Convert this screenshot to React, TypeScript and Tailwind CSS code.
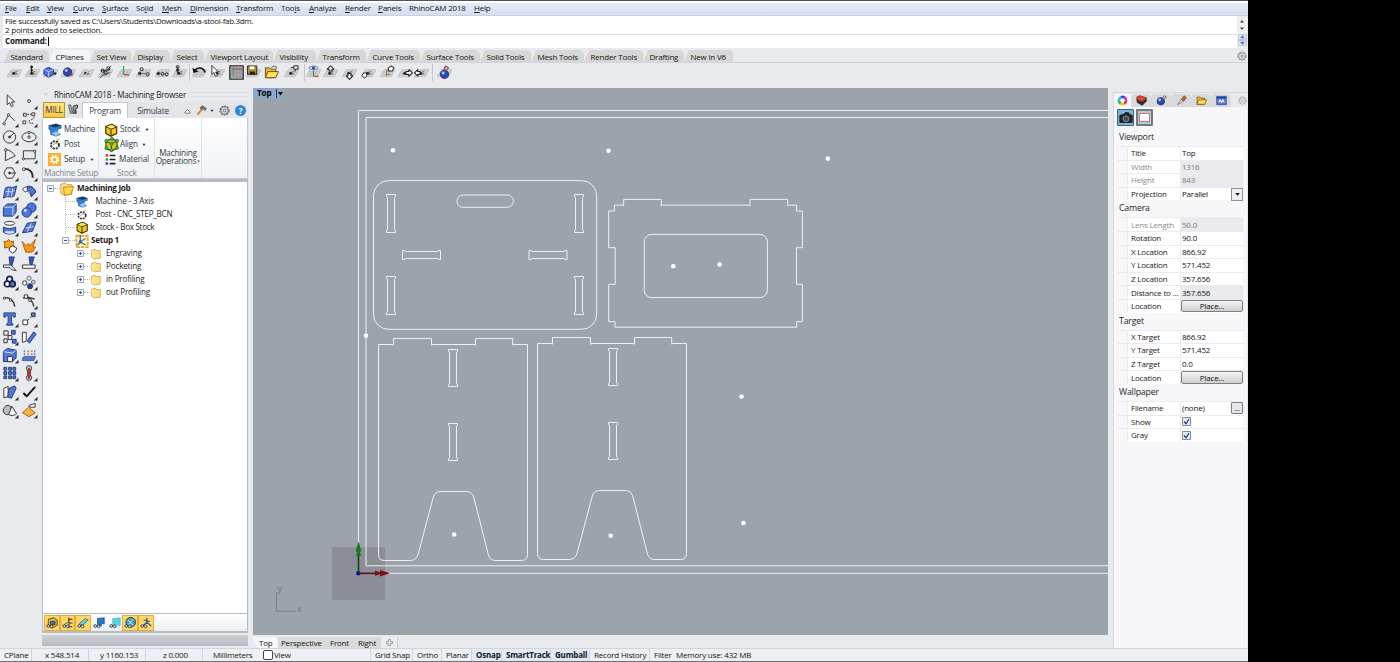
import React from "react";

type Node = React.ReactNode;

/* ---------- icon helpers ---------- */

function Ico({ children, className = "h-4 w-4", box = "0 0 16 16" }: { children: Node; className?: string; box?: string }) {
  return (
    <svg viewBox={box} className={`${className} shrink-0`} fill="none" stroke="#333" strokeWidth="1" strokeLinejoin="round">
      {children}
    </svg>
  );
}

const Plane = () => (
  <g>
    <path d="M4.500 5L16 5L12 12.500L0 12.500Z" fill="#d6d8da" stroke="#a9acb0" strokeWidth=".6" />
    <path d="M8.300 5L4 12.500M12.200 5L8 12.500M3 7.500H14.500M1.500 10H13.300" stroke="#a9acb0" strokeWidth=".6" />
  </g>
);
const Axes = () => (
  <g>
    <path d="M7 9L10.500 6.500" stroke="#3c9c4c" strokeWidth="1.200" />
    <path d="M7 9.500H11" stroke="#d04040" strokeWidth="1.200" />
    <circle cx="7" cy="9" r="1.500" fill="#222" stroke="none" />
  </g>
);
const Sphere = ({ x, y, r = 3.5 }: { x: number; y: number; r?: number }) => (
  <g>
    <circle cx={x} cy={y} r={r} fill="#2849b5" stroke="#16224f" strokeWidth=".7" />
    <circle cx={x - r * 0.3} cy={y - r * 0.35} r={r * 0.35} fill="#b7c8ff" stroke="none" />
  </g>
);
const Arrow = ({ d }: { d: string }) => <path d={d} fill="#fff" stroke="#222" strokeWidth="1.100" />;
const Folder = () => (
  <g>
    <path d="M1.500 3H6L7.500 4.500H12.500V13.500H1.500Z" fill="#f2b92c" stroke="#6d4c06" strokeWidth="1" />
    <path d="M4 7H15.500L12.500 13.500H1.500Z" fill="#ffdf63" stroke="#6d4c06" strokeWidth="1" />
  </g>
);

const toolbar: { w: string; g?: Node; sep?: boolean; pressed?: boolean }[] = [
  { w: "w-[18px]", g: <><Plane /><Axes /></> },
  { w: "w-[19px]", g: <><Plane /><Axes /><path d="M7 9V2" stroke="#222" strokeWidth="1.2" /><circle cx="7" cy="2" r="1.5" fill="#222" stroke="none" /><circle cx="7" cy="5.500" r="1.2" fill="#222" stroke="none" /></> },
  { w: "w-[17px]", g: <><Plane /><path d="M1 5L6 2.500L11 5V10L6 13L1 10Z" fill="#4a74dc" stroke="#1b2e78" /><path d="M1.500 5L6 7L10.500 5M6 7V12.500" stroke="#c8d8ff" /><circle cx="13" cy="9" r="1.300" fill="#222" stroke="none" /></> },
  { w: "w-[18px]", g: <><Plane /><Sphere x={7} y={7.5} r={4.500} /><circle cx="11" cy="10" r="1.5" fill="#a33" stroke="none" /></> },
  { w: "w-[19px]", g: <><Plane /><Axes /><path d="M6 12L12 3" stroke="#eee" /></> },
  { w: "w-[18px]", g: <><Plane /><path d="M2 14L14 1M3 6L13 5M6 11L13 8" stroke="#444" /><circle cx="5" cy="6" r="1.7" stroke="#222" /><circle cx="11" cy="3.500" r="1.7" stroke="#222" /><circle cx="8" cy="8" r="1.7" stroke="#222" /></> },
  { w: "w-[20px]", g: <><Plane /><path d="M7 1V10" stroke="#2fb045" strokeWidth="1.3" /><path d="M7 10L13 10.5" stroke="#d64545" strokeWidth="1.200" /></> },
  { w: "w-[19px]", g: <><Plane /><circle cx="6" cy="4.500" r="1.6" stroke="#222" /><circle cx="4" cy="9" r="1.4" fill="#222" /><circle cx="12.500" cy="10" r="1.7" stroke="#222" /><path d="M6 9L10 9" stroke="#c44" /></> },
  { w: "w-[18px]", g: <><Plane /><circle cx="3.500" cy="9" r="1.4" fill="#222" /><circle cx="8" cy="9.500" r="1.5" stroke="#222" /><circle cx="12.500" cy="10" r="1.6" stroke="#222" /></> },
  { w: "w-[16px]", g: <><Plane /><Axes /><path d="M6 9V2" stroke="#222" /><circle cx="6" cy="2" r="1.5" stroke="#222" /><circle cx="6" cy="5.500" r="1.3" fill="#222" /></> },
  { w: "w-[5px]", sep: true },
  { w: "w-[14px]", g: <><Plane /><path d="M3 6C6 1.500 12 2.500 14 8" stroke="#111" strokeWidth="1.7" /><path d="M.5 3L1.500 8.500L7 7Z" fill="#111" stroke="none" /></> },
  { w: "w-[22px]", g: <><Plane /><Axes /><path d="M2 .5V10L4 8L6 12L8 11L6 7.5H9Z" fill="#fff" stroke="#222" strokeWidth=".9" /></> },
  { w: "w-[16px]", pressed: true, g: <><path d="M.8 .8H15.2V15.2H.8Z" fill="#a4a4a8" stroke="#2b2b30" strokeWidth="1.300" /><path d="M1 4H15M1 8H15M8.500 1V15M12 1V15" stroke="#8e8e93" strokeWidth=".5" /><path d="M4.500 1.500V12" stroke="#3f9a4d" /><path d="M3.500 4.500H14.500" stroke="#b65050" /></> },
  { w: "w-[18px]", g: <><Plane /><path d="M1.500 1H11.5V10H1.500Z" fill="#a58f2e" stroke="#29251a" /><path d="M4 1.5H9V4.500H4Z" fill="#fff" stroke="none" /><path d="M4 7H9.500V10H4Z" fill="#222" stroke="none" /></> },
  { w: "w-[18px]", g: <><Folder /><path d="M8 3C10 0 13 1 13.500 4" stroke="#333" /></> },
  { w: "w-[22px]", g: <><Plane /><Axes /><path d="M7 3L12 2V7" stroke="#222" /><path d="M10.500 .8H15V4.500H10.500Z" fill="#eee" stroke="#222" /></> },
  { w: "w-[4px]", sep: true },
  { w: "w-[14px]", g: <><Plane /><path d="M3 3C6 .5 10 .5 13 3C10 5.500 6 5.500 3 3Z" fill="#fff" stroke="#579" /><circle cx="8" cy="3" r="1.8" fill="#2849b5" stroke="none" /><path d="M8 6V12" stroke="#2fa045" strokeWidth="1.300" /><path d="M8 12H13.500" stroke="#c44" strokeWidth="1.300" /></> },
  { w: "w-[21px]", g: <><Plane /><Axes /><Arrow d="M6.500 6.500V4.500H4.500L8 .8L11.500 4.500H9.500V6.500Z" /></> },
  { w: "w-[17px]", g: <><Plane /><Axes /><Arrow d="M6.500 9V11.500H4.500L8 15.300L11.500 11.500H9.500V9Z" /></> },
  { w: "w-[20px]", g: <><Plane /><Axes /><path d="M1 11L3 8.500H6V12L3.500 14Z" fill="#fff" stroke="#222" /></> },
  { w: "w-[19px]", g: <><Plane /><path d="M7 5V12" stroke="#c44" /><path d="M7 10H11" stroke="#2fa045" /><Arrow d="M9 6.500V3L12 1L15 3L13 6.500Z" /></> },
  { w: "w-[17px]", g: <><Plane /><Axes /><Arrow d="M8.500 7H11.500V5L15.500 8.500L11.500 12V10H8.500Z" /></> },
  { w: "w-[14px]", g: <><Plane /><Axes /><Arrow d="M6.500 7H4V5L.5 8.500L4 12V10H6.500Z" /></> },
  { w: "w-[9px]", sep: true },
  { w: "w-[14px]", g: <><Plane /><Sphere x={8} y={10} r={4.500} /><path d="M7 5L9 1L12.500 3L10 6Z" fill="#e8a0a0" stroke="#444" /></> },
];

const B = "#4e78d6";
const tools: Node[] = [
  <path d="M5 1.500V12L7.500 9.500L9.500 14L11.500 13L9.500 9H13Z" fill="#fff" />,
  <circle cx="8" cy="8" r="1.500" fill="#fff" />,
  <><path d="M1.500 13L6.500 3.500L13 10" /><circle cx="1.800" cy="13" r="1.200" fill="#fff" /><circle cx="6.500" cy="3.500" r="1.200" fill="#fff" /></>,
  <><path d="M3 3H11C15 3 14 8 10 9C6 10 7 13 13 12.500" strokeDasharray="2 1" /><path d="M2 2H5V5H2ZM11 1.500H14V4.500H11ZM1.500 10H4.500V13H1.500Z" fill="#fff" /></>,
  <><circle cx="7.500" cy="8" r="6.500" /><path d="M7.500 8L12 4" /><circle cx="7.500" cy="8" r="1" fill="#333" /></>,
  <><ellipse cx="8" cy="8" rx="7.500" ry="5" /><circle cx="8" cy="8" r="1.300" fill="#fff" /><circle cx="8" cy="3.300" r="1.300" fill="#fff" /></>,
  <><path d="M3 14L3.500 2C8 3 11 5 13.500 9Z" /><circle cx="3.500" cy="2.500" r="1.300" fill="#fff" /></>,
  <><path d="M2 3.500H14.500V12H2Z" /><circle cx="2" cy="12" r="1.200" fill="#fff" /><circle cx="14" cy="4" r="1.200" fill="#fff" /></>,
  <><path d="M4.500 2.500H10.500L13.500 8L10.500 13.500H4.500L1.500 8Z" /><circle cx="7.500" cy="8" r="1" fill="#333" /><path d="M8 8H14" /></>,
  <><path d="M2 4C8 3 12 6 12 13" strokeWidth="2" /><circle cx="2.500" cy="4" r="1.500" fill="#fff" /></>,
  <><path d="M3 4C7 1 9 5 15 1.500L12.500 12C8 15 6 11 1 14.500Z" fill={B} stroke="#26397c" /><path d="M7 3.500L5.500 12.500M11 3.500L9.500 12.500M3 8C7 6 9 10 13 6" stroke="#d7e2ff" /></>,
  <><path d="M1 5C7 -.5 13 1.500 15 8L10.500 13C9 8 6 6 4 8Z" fill="#fff" /><path d="M6 3C10 1.500 14 4 15 8L10.500 13C10.500 8.500 8 6 6 6Z" fill={B} stroke="#26397c" /></>,
  <><path d="M1 5L5.500 1.500H14.500V10L11 14.500H1Z" fill={B} stroke="#26397c" /><path d="M1.500 5H11V14M11 5L14 2" stroke="#d7e2ff" /></>,
  <><circle cx="10.500" cy="5.500" r="5" fill={B} stroke="#26397c" /><circle cx="5.500" cy="10.500" r="5" fill={B} stroke="#26397c" /><circle cx="4" cy="8.500" r="1.500" fill="#d7e2ff" stroke="none" /></>,
  <><ellipse cx="7.500" cy="3" rx="5.500" ry="2" fill="#fff" /><path d="M1 7C4 9 11 9 14 7V12.500C11 15 4 15 1 12.500Z" fill={B} stroke="#26397c" /><path d="M3 12C6 13 9 13 12 12" stroke="#d7e2ff" strokeWidth="2.500" /></>,
  <><path d="M1 13L6 3L15.500 1.500L11.500 11.500Z" fill={B} stroke="#26397c" /><path d="M4 8L13 6.500M6 12L10.500 3" stroke="#d7e2ff" /></>,
  <><path d="M1.500 3L4.500 3.500L6.500 .8L8.500 3.500L12 3L11 6.500L13 9L10 10L8 12L6 9.500L2 10L2.500 6.500Z" fill="#f6a31d" stroke="#9a5d00" /><path d="M8 9L11 8L15 10L14 13.500L10.500 15.500L7 12.500Z" fill="#fff" /></>,
  <path d="M.5 3L5 7.500L7.500 5L8.500 8L15 .8L12 9L15 9L11.500 14.500H4.500Z" fill="#f6941d" stroke="#b96200" />,
  <><path d="M7 .5H12.500L10 10L8 9Z" fill="#3058c0" stroke="#26397c" /><path d="M1 9H9L14.500 15L10 14L8 11.500H1Z" fill="#fff" /></>,
  <><path d="M8 .5H13.500L11 9L9 8Z" fill="#3058c0" stroke="#26397c" /><path d="M1 9H14.500V12.500H1Z" fill="#fff" /></>,
  <><circle cx="7.500" cy="5" r="3" fill="#dfe6fb" strokeWidth="1.800" stroke="#18203c" /><circle cx="5" cy="10" r="3" fill="#fff" strokeWidth="1.800" stroke="#18203c" /><circle cx="10.500" cy="10" r="3" fill={B} strokeWidth="1.800" stroke="#18203c" /></>,
  <><circle cx="8" cy="4" r="2.200" fill="#dfe6fb" stroke="#667" /><circle cx="3.500" cy="9" r="2.300" fill="#fff" /><circle cx="12.500" cy="8" r="2" fill="#b9c8f0" stroke="#667" /><circle cx="9" cy="12.500" r="2.700" fill="#24409c" /></>,
  <><path d="M1.500 5C7 3 12 7 13 14" strokeWidth="1.500" /><circle cx="2" cy="5" r="1.200" fill="#fff" /><circle cx="8.500" cy="7" r="1.300" fill="#fff" /></>,
  <><path d="M1.500 5C7 3 12 7 13 14M4 3L14 6" strokeWidth="1.300" /><path d="M3 1.500H6.500V5H3Z" fill="#fff" /><circle cx="9" cy="7" r="1.500" fill="#fff" /></>,
  <path d="M1.500 1.500H13.500V6H12L10.500 4.500H9.500V12L11 13V14.500H4.500V13L6 12V4.500H4.500L3 6H1.500Z" fill={B} stroke="#26397c" />,
  <><path d="M1.500 9H6.500V14H1.500Z" fill="#fff" /><path d="M10.500 1.500H14.500V5.500H10.500Z" fill={B} /><path d="M7 9L10 6" strokeDasharray="1.500 1" /></>,
  <><path d="M1.500 1.500H6V6H1.500ZM6 6.500H10V10.500H6ZM1.500 10H5V14H1.500Z" fill="#fff" stroke="#222" /><path d="M9.500 1H13.500V5H9.500ZM10.500 10.500H14.500V14.500H10.500Z" fill={B} stroke="#26397c" /></>,
  <><path d="M1 3H5V12.500L1 13.500Z" fill="#fff" /><path d="M6 12L13 2.500L15.500 5L8.500 14.500Z" fill={B} stroke="#26397c" /></>,
  <><path d="M1 4L5.500 1L14.500 3V11L10.500 15H1Z" fill={B} stroke="#26397c" /><path d="M5.500 9.500H10.500V15H5.500Z" fill="#fff" /><path d="M1.500 4.500L10.500 6L14 3.500" stroke="#d7e2ff" /></>,
  <><path d="M1 11L3 9.500H15L13 14H1Z" fill={B} stroke="#26397c" strokeWidth=".6" /><path d="M3 3V8M7 3V8M11 3V8M14 3V8" stroke="#555" strokeDasharray="2 1" /></>,
  <path d="M1.500 2H4.500V5H1.500ZM6.500 2H9.500V5H6.500ZM11 2H14V5H11ZM1.500 6.500H4.500V9.500H1.500ZM6.500 6.500H9.500V9.500H6.500ZM11 6.500H14V9.500H11ZM1.500 11H4.500V14H1.500ZM6.500 11H9.500V14H6.500ZM11 11H14V14H11Z" fill={B} stroke="#26397c" />,
  <><circle cx="8" cy="3" r="2.800" fill="#d9dcdf" /><circle cx="8" cy="13" r="2.800" fill="#d9dcdf" /><path d="M6.500 6H9.500V10H6.500Z" fill="#eee" /><path d="M8 2.500V5M8 7V9M8 11V14" stroke="#cc2222" strokeWidth="2.500" /></>,
  <><path d="M1.500 4L6 2V13L1.500 14Z" fill="#fff" /><path d="M7 4L13 1.500L14.500 4L9.500 14.500L5.500 13.500Z" fill={B} stroke="#26397c" /></>,
  <path d="M2 9L5.500 12.500L14.500 2.500" stroke="#111" strokeWidth="2" />,
  <><path d="M.8 10C.8 2.500 7 1.500 9 5V12C6 13.500 3 13.500 .8 10Z" fill="#b9bcc1" /><path d="M10 4L15 12C12 14.500 8 14 6.500 12.500Z" fill="#f5f5f5" /></>,
  <><path d="M1 11L7.500 5L14.500 11L8 15Z" fill="#f4b342" stroke="#a06412" /><path d="M8 3L14.500 1V5L9 5Z" fill="#fff" /></>,
];

const MachineIco = ({ c = "h-[14px] w-[14px]" }: { c?: string }) => (
  <Ico className={c}>
    <path d="M1 3L9 1L15 3V6L11 7V11L14 13L9 15L3 13V9L1 7Z" fill="#2d7fd2" stroke="#1a4f86" strokeWidth=".7" />
    <path d="M1 3L8 5L15 3L9 1Z" fill="#20364f" stroke="none" />
    <path d="M4 12L10 9L14 12L9 15Z" fill="#8fc3f4" stroke="none" />
  </Ico>
);
const PostIco = ({ c = "h-[13px] w-[14px]" }: { c?: string }) => (
  <Ico className={c}>
    <ellipse cx="8" cy="8.500" rx="5" ry="4.500" fill="#fff" stroke="#2b2b2b" strokeWidth="2.200" strokeDasharray="2.600 1.200" />
    <path d="M5.500 9C7.500 6 10 6 11 8" stroke="#777" />
    <path d="M10 3L13 2" stroke="#d9a63c" strokeWidth="1.500" />
  </Ico>
);
const StockIco = ({ c = "h-[14px] w-[14px]" }: { c?: string }) => (
  <Ico className={c}>
    <path d="M2 4L9 1.500L14.500 4.500V12L8 15L2 12Z" fill="#f2c714" stroke="#3f3405" strokeWidth="1.300" />
    <path d="M2 4L8 7L14.500 4.500M8 7V15" stroke="#3f3405" strokeWidth="1.200" />
    <path d="M3 4.200L9 2.200L13 4.500L8 6.200Z" fill="#ffe86a" stroke="none" />
  </Ico>
);
const AlignIco = () => (
  <Ico className="h-[15px] w-[15px]">
    <path d="M2 4L9 2L14 4.500V12L8 15L2 12Z" fill="#dfc521" stroke="#27420f" strokeWidth="1.200" />
    <path d="M2 5L8 7L14 4.500M8 7V15" stroke="#27420f" />
    <g fill="#3fc04a" stroke="#176b22" strokeWidth=".8">
      <circle cx="2.500" cy="4" r="1.600" /><circle cx="8.500" cy="2" r="1.600" /><circle cx="14" cy="4" r="1.600" />
      <circle cx="8" cy="7.500" r="1.600" /><circle cx="2.500" cy="12" r="1.600" /><circle cx="8" cy="14" r="1.600" /><circle cx="14" cy="11.500" r="1.600" />
    </g>
  </Ico>
);
const SetupIco = () => (
  <Ico className="h-[13px] w-[13px]">
    <path d="M0 0H16V16H0Z" fill="#f6b02c" stroke="none" />
    <circle cx="8" cy="8" r="5" stroke="#fff" strokeWidth="2" strokeDasharray="2 1.927" />
    <circle cx="8" cy="8" r="3.200" stroke="#fff" strokeWidth="1.800" />
  </Ico>
);
const Setup1Ico = () => (
  <Ico className="h-[14px] w-[14px]">
    <path d="M1.500 2H14.500V15H1.500Z" fill="#fff4cf" stroke="#eca527" strokeWidth="2.200" strokeDasharray="4 1" />
    <path d="M6 1V9L12 12.500M6 9L12 5M6 9L3 13" stroke="#245f9e" strokeWidth="1.300" />
    <circle cx="6" cy="9" r="1.800" fill="#245f9e" stroke="none" />
  </Ico>
);
const MaterialIco = () => (
  <Ico className="h-[13px] w-[13px]">
    <path d="M2 1.500H5V4.500H2Z" fill="#d52a2a" stroke="none" />
    <path d="M2 6.500H5V9.500H2Z" fill="#23a43a" stroke="none" />
    <path d="M2 11.500H5V14.500H2Z" fill="#2539c8" stroke="none" />
    <path d="M7 3H14M7 8H14M7 13H14" stroke="#222" strokeWidth="2" />
  </Ico>
);
const YellowFolder = ({ open = false }: { open?: boolean }) => (
  <Ico className={open ? "h-[14px] w-[14px]" : "h-[12px] w-[11px]"}>
    <path d="M1 2.500L6 1L8 3H13.500V14L5 15L1 13Z" fill="#fbe083" stroke="#c99a2b" strokeWidth="1" />
    {open ? <path d="M4 6L15.500 5L12.500 14L5 15Z" fill="#ffd34b" stroke="#b98617" /> : <path d="M3 4V13" stroke="#fff3bd" strokeWidth="1.500" />}
  </Ico>
);
const Gear = ({ className = "h-[11px] w-[11px]", tint = "#666" }: { className?: string; tint?: string }) => (
  <Ico className={className}>
    <circle cx="8" cy="8" r="6.500" stroke={tint} strokeWidth="1.800" strokeDasharray="3 1.200" />
    <circle cx="8" cy="8" r="5" stroke={tint} strokeWidth="1" />
    <circle cx="8" cy="8" r="2" stroke={tint} strokeWidth="1.300" />
  </Ico>
);

/* ---------- top bars ---------- */

const menus: [string, number, string][] = [
  ["File", 0, "w-[21px]"], ["Edit", 0, "w-[21px]"], ["View", 0, "w-[26px]"], ["Curve", 0, "w-[29px]"],
  ["Surface", 0, "w-[34px]"], ["Solid", 2, "w-[26px]"], ["Mesh", 0, "w-[28px]"], ["Dimension", 0, "w-[46px]"],
  ["Transform", 0, "w-[45px]"], ["Tools", 3, "w-[28px]"], ["Analyze", 0, "w-[36px]"], ["Render", 0, "w-[33px]"],
  ["Panels", 0, "w-[31px]"], ["RhinoCAM 2018", -1, "w-[65px]"], ["Help", 0, "w-[30px]"],
];

function MenuBar() {
  return (
    <div className="flex h-[15px] shrink-0 items-start border-t-2 border-b border-t-white border-b-[#c9d0e2] bg-gradient-to-b from-[#e6ebf6] to-[#d6def0] pl-[5px]">
      {menus.map(([t, u, w]) => (
        <span key={t} className={`${w} shrink-0 leading-[9px] whitespace-nowrap`}>
          {u < 0 ? t : <>{t.slice(0, u)}<span className="underline decoration-[0.7px] underline-offset-1">{t[u]}</span>{t.slice(u + 1)}</>}
        </span>
      ))}
    </div>
  );
}

function CommandArea() {
  return (
    <div className="flex h-[33px] shrink-0 bg-[#e9eaee] pb-[2px] pl-[3px] pr-[1px]">
      <div className="flex flex-1 flex-col">
        <div className="h-[19px] border-b border-[#d5dfe9] bg-white pl-[2px] leading-[9px]">
          <div className="tracking-[-0.320px]">File successfully saved as C:\Users\Students\Downloads\a-stool-fab.3dm.</div>
          <div>2 points added to selection.</div>
        </div>
        <div className="flex flex-1 items-center bg-white pb-px pl-[2px]">
          <b>Command:</b><span className="ml-[1px] h-[9px] w-px bg-black" />
        </div>
      </div>
      <div className="flex w-[10px] flex-col items-center bg-[#eeeff1]">
        <Ico className="h-[18px] w-[8px]" box="0 0 8 18"><path d="M4 4L6 6.500H2ZM4 14L6 11.500H2Z" fill="#444" stroke="none" /></Ico>
        <Ico className="h-[12px] w-[9px]" box="0 0 9 12"><path d="M.5 .5H8.500V11.500H.5Z" fill="#e3e7ee" stroke="#c2c8d4" /><path d="M4.500 1.500L6.500 4H2.500ZM4.500 10.500L6.500 8H2.500ZM1 6H8" fill="#6177c7" stroke="#6177c7" strokeWidth=".6" /></Ico>
      </div>
    </div>
  );
}

const tabs: [string, string][] = [
  ["Standard", "w-[45px]"], ["CPlanes", "w-[41px]"], ["Set View", "w-[41px]"], ["Display", "w-[39px]"], ["Select", "w-[34px]"],
  ["Viewport Layout", "w-[69px]"], ["Visibility", "w-[43px]"], ["Transform", "w-[50px]"], ["Curve Tools", "w-[54px]"],
  ["Surface Tools", "w-[60px]"], ["Solid Tools", "w-[51px]"], ["Mesh Tools", "w-[53px]"], ["Render Tools", "w-[59px]"],
  ["Drafting", "w-[41px]"], ["New in V6", "w-[49px]"],
];

function ToolTabs() {
  return (
    <div className="flex h-[14px] shrink-0 items-end justify-between border-b border-[#ccd3e2] bg-[#e9eaee] pl-[4px] pr-[1px]">
      <div className="flex">
        {tabs.map(([t, w]) => (
          <div key={t} className={`${w} h-[12px] shrink-0 pl-[6.500px] leading-[14px] whitespace-nowrap [clip-path:polygon(0_100%,5px_0,calc(100%-3px)_0,100%_25%,100%_100%)] ${t === "CPlanes" ? "bg-[#f3f4f8]" : "bg-[#d7d7d7]"}`}>{t}</div>
        ))}
      </div>
      <Gear className="mb-[1px] h-[10px] w-[10px]" tint="#888" />
    </div>
  );
}

function Toolbar() {
  return (
    <div className="flex h-[24px] shrink-0 items-start bg-[#e9eaee] pt-[1px] pl-[5px]">
      {toolbar.map((t, i) => (
        <div key={i} className={`${t.w} flex h-[17px] shrink-0 items-center justify-center`}>
          {t.sep ? <span className="h-[17px] w-px shrink-0 bg-[#c3c6cc]" /> : <Ico className={t.pressed ? "h-[15px] w-[15px]" : "h-[15px] w-[15px]"}>{t.g}</Ico>}
        </div>
      ))}
    </div>
  );
}

/* ---------- left side ---------- */

function ToolPalette() {
  return (
    <div className="grid w-[38px] shrink-0 auto-rows-[18.200px] grid-cols-[19px_19px] content-start pt-[5px] pl-px">
      {tools.map((g, i) => (
        <div key={i} className="flex items-center justify-center">
          <Ico className="h-[17px] w-[17px]" box="-.5 -.5 18 18">
            {g}
            {i > 0 && ![16, 18, 22, 27].includes(i) && <path d="M17 13V17H13Z" fill="#333" stroke="none" />}
          </Ico>
        </div>
      ))}
    </div>
  );
}

const Caret = () => <Ico className="ml-[3px] h-[4px] w-[4px]" box="0 0 5 4"><path d="M.5 .5H4.500L2.500 3.300Z" fill="#333" stroke="none" /></Ico>;

function Ribbon() {
  return (
    <div className="flex h-[61px] shrink-0 border-x border-b border-[#c5cad2] bg-gradient-to-b from-white to-[#f0f2f4] text-[8.200px] tracking-[-0.200px] text-[#333c4c]">
      <div className="flex w-[56px] flex-col border-r border-[#e1e3e6] pt-[4px] pl-[5px]">
        <div className="flex h-[15px] items-center gap-[2px]"><MachineIco /><span>Machine</span></div>
        <div className="flex h-[15px] items-center gap-[2px]"><PostIco /><span>Post</span></div>
        <div className="flex h-[15px] items-center gap-[2px]"><SetupIco /><span className="ml-px">Setup</span><Caret /></div>
        <div className="-ml-[4px] leading-[11px] whitespace-nowrap text-[#7d8694]">Machine Setup</div>
      </div>
      <div className="flex w-[56px] flex-col border-r border-[#e1e3e6] pt-[4px] pl-[5px]">
        <div className="flex h-[15px] items-center gap-[2px]"><StockIco /><span>Stock</span><Caret /></div>
        <div className="flex h-[15px] items-center gap-[1px]"><AlignIco /><span>Align</span><Caret /></div>
        <div className="flex h-[15px] items-center gap-[2px]"><MaterialIco /><span>Material</span></div>
        <div className="pl-[13px] leading-[11px] text-[#7d8694]">Stock</div>
      </div>
      <div className="flex w-[47px] flex-col items-center border-r border-[#e1e3e6] pt-[31px] leading-[8px]">
        <span>Machining</span>
        <span className="flex items-center">Operations<Ico className="ml-[1px] h-[3px] w-[3px]" box="0 0 5 4"><path d="M.5 .5H4.500L2.500 3.300Z" fill="#333" stroke="none" /></Ico></span>
      </div>
    </div>
  );
}

const Box = ({ plus = false }: { plus?: boolean }) => (
  <Ico className="h-[7px] w-[7px]" box="0 0 7 7">
    <path d="M.5 .5H6.500V6.500H.5Z" fill="#f4f5f8" stroke="#a3aab6" />
    <path d={plus ? "M2 3.500H5M3.500 2V5" : "M2 3.500H5"} stroke="#3d52a0" />
  </Ico>
);

const Dots = ({ w = "w-[9px]" }: { w?: string }) => <span className={`${w} border-t border-dotted border-[#bbb]`} />;

function Tree() {
  return (
    <div className="flex-1 overflow-hidden border border-t-[3px] border-[#b7bcc4] bg-white text-[8.100px] tracking-[-0.160px] text-[#1d1d1d]">
      <div className="flex h-[13px] items-center pl-[4px]"><Box /><Dots w="w-[6px]" /><YellowFolder open /><b className="ml-[3px] tracking-[-0.280px]">Machining Job</b></div>
      <div className="ml-[22px] border-l border-dotted border-[#bbb]">
        <div className="flex h-[13px] items-center"><Dots /><MachineIco c="h-[12px] w-[14px]" /><span className="ml-[6.500px]">Machine - 3 Axis</span></div>
        <div className="flex h-[13px] items-center"><Dots /><PostIco c="h-[12px] w-[14px]" /><span className="ml-[6.500px] tracking-[-0.240px]">Post - CNC_STEP_BCN</span></div>
        <div className="flex h-[13px] items-center"><Dots /><StockIco c="h-[13px] w-[14px]" /><span className="ml-[6.500px] tracking-[-0.300px]">Stock - Box Stock</span></div>
      </div>
      <div className="flex h-[13px] items-center pl-[19px]"><Box /><Dots w="w-[6px]" /><Setup1Ico /><b className="ml-[2px] tracking-[-0.280px]">Setup 1</b></div>
      {["Engraving", "Pocketing", "in Profiling", "out Profiling"].map((t) => (
        <div key={t} className="flex h-[13px] items-center pl-[34px]"><Box plus /><Dots w="w-[6px]" /><span className="w-px" /><YellowFolder /><span className="ml-[4px]">{t}</span></div>
      ))}
    </div>
  );
}

const simIcons: [boolean, Node][] = [
  [true, <><path d="M3 3L10 1L15 4V11L8 15L3 11Z" fill="#d8b63c" stroke="#333" /><path d="M6 6H12V10H6Z" fill="#2b7cc0" /></>],
  [true, <><path d="M9 1V15M9 3H14M9 8H14M9 13H14" stroke="#333" strokeWidth="1.500" /><path d="M8 2H11V5H8Z" fill="#c33" stroke="none" /><path d="M8 7H11V10H8Z" fill="#2a3" stroke="none" /><path d="M3 10L8 7" stroke="#246" /></>],
  [true, <path d="M3 9L11 2L15 4L8 11Z" fill="#74c9d4" stroke="#27707e" />],
  [false, <path d="M6 2L15 1V9L11 9V12L6 10Z" fill="#2878cc" stroke="#184d86" />],
  [false, <path d="M5 2L15 1V11L5 11Z" fill="#54d5d8" stroke="#63b8c0" />],
  [true, <><circle cx="9" cy="7" r="6.500" fill="#45a2b8" stroke="#225" /><path d="M5 4L12 11M12 3L6 10" stroke="#fff" /></>],
  [true, <path d="M9 1V7L15 12M9 7L4 12M5 4L13 6" stroke="#2d5c8c" strokeWidth="1.500" />],
];

function Browser() {
  return (
    <div className="ml-[4px] flex w-[206px] shrink-0 flex-col pt-[2px]">
      <div className="flex h-[11px] shrink-0 items-center text-[8.100px] leading-[12px] tracking-[-0.220px] text-[#222]">
        <span className="w-[12px] pl-[2px] text-[7px] text-[#b9c3d2]">×</span>
        <span className="whitespace-nowrap">RhinoCAM 2018 - Machining Browser</span>
        <span className="ml-[2px] h-[5px] flex-1 border-y border-[#dde1ea]" />
      </div>
      <div className="mt-[2px] flex h-[16px] shrink-0 items-end bg-[#e3e5e8] pl-px text-[8.200px] text-[#333c4c]">
        <div className="flex h-[16px] w-[22px] items-center justify-center border border-[#bb9430] bg-gradient-to-b from-[#ffe386] to-[#fbc73e]">MILL</div>
        <Ico className="mx-[2px] mb-[2px] h-[13px] w-[12px]"><path d="M2 2L4.500 13L7 13L5 2Z" fill="#bbb" stroke="#444" /><path d="M8 5V13H11V8L14 6V2L9 3Z" fill="#999" stroke="#333" strokeWidth="1.200" /><path d="M12 9V14" strokeWidth="1.500" /></Ico>
        <div className="ml-px h-[16px] w-[46px] border-x border-t border-[#c5cad2] bg-white text-center leading-[16px]">Program</div>
        <div className="w-[50px] text-center leading-[15px]">Simulate</div>
        <div className="flex h-[15px] flex-1 items-center justify-end gap-[5px]">
          <Ico className="h-[6px] w-[7px]" box="0 0 8 7"><path d="M1 5L4 1.500L7 5V6H1Z" fill="#fff" stroke="#666" /></Ico>
          <Ico className="h-[11px] w-[11px]"><path d="M2 14L9 6" stroke="#d18a3c" strokeWidth="3" /><path d="M6 4L9 1L15 5L13 8L10 5L8 7Z" fill="#777" stroke="#444" /></Ico>
          <Ico className="-ml-[2px] h-[4px] w-[4px]" box="0 0 5 4"><path d="M.5 .5H4.500L2.500 3.300Z" fill="#333" stroke="none" /></Ico>
          <Gear />
          <span className="mr-[2px] flex h-[11px] w-[11px] items-center justify-center rounded-full bg-[#2f87d8] text-[8px] font-bold text-white">?</span>
        </div>
      </div>
      <Ribbon />
      <div className="flex flex-1 flex-col">
        <Tree />
        <div className="flex h-[19px] shrink-0 items-center border-x border-b-2 border-[#b7bcc4] bg-gradient-to-b from-white to-[#eceef0] pl-px">
          {simIcons.map(([on, g], i) => (
            <div key={i} className={`flex h-[16px] w-[15.700px] items-center justify-center border ${on ? "border-[#e0ae3c] bg-[#ffd667]" : "border-transparent"}`}>
              <Ico className="h-[12px] w-[12px]">{g}<circle cx="3" cy="12" r="1.800" fill="#eee" stroke="#234" strokeWidth="1.200" /><circle cx="7.500" cy="12.500" r="1.800" fill="#eee" stroke="#234" strokeWidth="1.200" /></Ico>
            </div>
          ))}
        </div>
        <div className="mt-[2px] mb-[2px] h-[11px] shrink-0 bg-gradient-to-b from-[#cdd0d5] to-[#b7bbc1]" />
      </div>
    </div>
  );
}

/* ---------- viewport drawing ---------- */

const slotV = (x: number, y: number, h = 38) =>
  `M${x} ${y}H${x + 9}V${y + 2}L${x + 8} ${y + 2.6}V${y + h - 2.6}L${x + 9} ${y + h - 2}V${y + h}H${x}V${y + h - 2}L${x + 1} ${y + h - 2.6}V${y + 2.6}L${x} ${y + 2}Z`;
const slotH = (x: number, y: number, w = 38) =>
  `M${x} ${y}V${y + 9}H${x + 2}L${x + 2.6} ${y + 8}H${x + w - 2.6}L${x + w - 2} ${y + 9}H${x + w}V${y}H${x + w - 2}L${x + w - 2.6} ${y + 1}H${x + 2.6}L${x + 2} ${y}Z`;
const side =
  "M623.700 205.800V199.400H661.300V205.800L663 205.100H748.500L750 205.800V199.400H787.700V205.800L789 205.100H796.700V211L802.400 211V247.700H796.500V284.300H802.400V321.700H796.700V327.200H615V321.700H608.700V284.300H615.200V247.700H608.700V211H614.400V205.100H622Z";
const leg =
  "M378.500 554.500V344.500H392L393.500 345.200V338.500H431.500V345.200L433 344.500H474L475.500 345.200V338.500H512.700V345.200L514 344.500H527.500V554.500Q527.500 560.500 521.500 560.500H495Q489.800 560.500 488.300 554.500L474 498Q472.300 491.500 466.500 491.500H440.500Q435 491.500 433.300 497L418.500 553Q416.500 560.500 410.500 560.500H384.500Q378.500 560.500 378.500 554.500Z";
const points = [[393, 150.3], [608.500, 150.800], [827.800, 158.600], [673.300, 266.300], [719.600, 264.500], [366, 335.800], [741.500, 396.500], [743.500, 523], [454.200, 534.500], [610.700, 535.700]];

function Drawing() {
  return (
    <svg viewBox="253 88 855 547" className="h-[547px] w-[855px] shrink-0 bg-[#9da3ab]" fill="none" stroke="#eff0f1" strokeWidth="1">
      <path d="M332 547H385V600H332Z" fill="#8b8e96" stroke="none" />
      <path d="M1110 110.500H358.500V573.300H1110M1110 117.500H366V565.800H1110" />
      <rect x="373.500" y="180.600" width="223.200" height="148.700" rx="15" />
      <rect x="457" y="195" width="56.300" height="12.300" rx="6.100" />
      <path d={[slotV(386.500, 194.500), slotV(386.500, 276.500), slotV(574.500, 194.500), slotV(574.500, 276.500), slotH(402.500, 250.500), slotH(529, 250.500)].join("")} />
      <path d={side} />
      <rect x="644.200" y="234.400" width="123.200" height="63.200" rx="7.500" />
      <path d={leg + slotV(448.500, 349.500, 37) + slotV(448.500, 423.500, 37)} />
      <path transform="translate(159 -1)" d={leg + slotV(449.500, 349.500, 37) + slotV(449.500, 423.500, 37)} />
      {points.map(([x, y]) => <circle key={`${x}-${y}`} cx={x} cy={y} r="2.300" fill="#fff" stroke="none" />)}
      <path d="M358.500 572V551" stroke="#0c4d12" strokeWidth="1.600" />
      <path d="M358.500 541.500L361.500 551.500H355.500ZM358.500 548L361 556H356Z" fill="#127a1a" stroke="none" />
      <path d="M359 573.300H380" stroke="#5c0a0e" strokeWidth="1.600" />
      <path d="M390 573.300L380 570V576.600ZM382 573.300L375 570.500V576Z" fill="#7c1016" stroke="none" />
      <circle cx="358.300" cy="573.300" r="2.200" fill="#111a78" stroke="none" />
      <path d="M276.500 592V611.200H296" stroke="#7c8188" />
      <text x="277.500" y="591.500" fill="#71767d" stroke="none" fontSize="9" fontFamily="Open Sans, sans-serif">y</text>
      <text x="297" y="612" fill="#71767d" stroke="none" fontSize="9" fontFamily="Open Sans, sans-serif">x</text>
    </svg>
  );
}

function Viewport() {
  return (
    <div className="ml-[5px] flex w-[855px] shrink-0 flex-col pt-px">
      <div className="relative flex h-[547px]">
        <Drawing />
        <div className="absolute top-0 left-0 flex h-[11px] w-[30px] items-center bg-[#8ba8cc] pl-[4px] text-[8.200px] font-bold text-black">
          Top<span className="ml-[5px] h-[9px] w-px bg-[#333]" />
          <Ico className="ml-px h-[4px] w-[5px]" box="0 0 5 4"><path d="M0 0H5L2.500 3.500Z" fill="#000" stroke="none" /></Ico>
        </div>
      </div>
      <div className="flex h-[12px] items-start pt-[2px] leading-[11px]">
        <span className="h-[11px] w-[25px] bg-[#f6f7fa] pl-[6px] [clip-path:polygon(0_0,calc(100%-3px)_0,100%_30%,100%_100%,5px_100%)]">Top</span>
        <span className="h-[11px] w-[49px] bg-[#dadada] pl-[3px]">Perspective</span>
        <span className="h-[11px] w-[27px] bg-[#dadada] pl-[3px]">Front</span>
        <span className="h-[11px] w-[27px] bg-[#dadada] pl-[4px]">Right</span>
        <span className="flex h-[11px] w-[17px] items-center justify-center border-r border-[#c9cedb] bg-[#eceef3]">
          <Ico className="h-[7px] w-[7px]" box="0 0 8 8"><path d="M3 .5H5V3H7.500V5H5V7.500H3V5H.5V3H3Z" fill="#fff" stroke="#888" /></Ico>
        </span>
      </div>
    </div>
  );
}

/* ---------- right side ---------- */

type Row = [string, string, ("dim" | "gray" | "select" | "button" | "more" | "check")?];
const groups: [string, Row[]][] = [
  ["Viewport", [["Title", "Top"], ["Width", "1316", "dim"], ["Height", "843", "dim"], ["Projection", "Parallel", "select"]]],
  ["Camera", [["Lens Length", "50.0", "dim"], ["Rotation", "90.0"], ["X Location", "866.92"], ["Y Location", "571.452"], ["Z Location", "357.656"], ["Distance to ...", "357.656", "gray"], ["Location", "Place...", "button"]]],
  ["Target", [["X Target", "866.92"], ["Y Target", "571.452"], ["Z Target", "0.0"], ["Location", "Place...", "button"]]],
  ["Wallpaper", [["Filename", "(none)", "more"], ["Show", "", "check"], ["Gray", "", "check"]]],
];

const wheel = ["#e33", "#f5c518", "#2fc14a", "#2bc4d8", "#3a4be0", "#c3d"];
const panelTabs: Node[] = [
  <>{wheel.map((c, i) => <circle key={c} cx="8" cy="8" r="5.200" stroke={c} strokeWidth="4" strokeDasharray="5.600 27.072" strokeDashoffset={-i * 5.445} />)}</>,
  <><path d="M1 6L9 10L15 5V9L9 15L2 11Z" fill="#3b2a2a" stroke="#222" /><path d="M1 3L6 1L15 4L9 9L2 7Z" fill="#e2492b" stroke="#8a2010" /></>,
  <><Sphere x={7} y={9} r={5.500} /><path d="M9 5L12 1L15 3L12 6Z" fill="#ccc" stroke="#444" /></>,
  <><path d="M2 14L8 6L11 9Z" fill="#fff" stroke="#555" /><path d="M8 6L12 1L15 4L11 9Z" fill="#d85a3c" stroke="#7a2a18" /></>,
  <Folder />,
  <><path d="M1 2H15V14H1Z" fill="#5575d8" stroke="#24409c" /><path d="M1 4H15" stroke="#24409c" strokeWidth="2" /><path d="M4 11L6 7L8 11L10 7L12 11" stroke="#fff" strokeWidth="1.500" /></>,
];

function PropValue({ v, kind }: { v: string; kind?: Row[2] }) {
  if (kind === "button")
    return <div className="flex h-[12.500px] w-[63px] items-center justify-center rounded-[2px] border border-[#7c7f84] bg-gradient-to-b from-[#f4f4f4] to-[#cfcfcf]">{v}</div>;
  if (kind === "check")
    return (
      <Ico className="ml-[1px] h-[9px] w-[9px]" box="0 0 9 9"><path d="M.5 .5H8.500V8.500H.5Z" fill="#e6ebf3" stroke="#868c95" /><path d="M2 4.500L4 6.800L7 2" stroke="#2d3f92" strokeWidth="1.300" /></Ico>
    );
  return (
    <>
      <span className="flex-1 pl-[1px]">{v}</span>
      {kind === "select" && <span className="flex h-[13px] w-[12px] items-center justify-center border border-[#8d9094] bg-[#f0f0f0]"><Ico className="h-[3px] w-[5px]" box="0 0 6 4"><path d="M0 0H6L3 3.800Z" fill="#000" stroke="none" /></Ico></span>}
      {kind === "more" && <span className="flex h-[12px] w-[12px] items-center justify-center rounded-[1px] border border-[#7c7f84] bg-[#e6e6e6] leading-[8px]">...</span>}
    </>
  );
}

function Properties() {
  return (
    <div className="ml-[5px] flex w-[134px] shrink-0 flex-col pt-[5px]">
      <div className="flex h-[15px] shrink-0 items-end border-t border-l border-[#d3d9e6]">
        {panelTabs.map((g, i) => (
          <div key={i} className={`flex h-[13px] items-center justify-center rounded-t-[4px] ${i === 0 ? "w-[17px] bg-[#f6f7fa]" : "w-[20px] bg-[#d9dadc]"}`}>
            <Ico className="h-[11px] w-[11px]">{g}</Ico>
          </div>
        ))}
        <div className="flex h-[13px] w-[16px] items-center justify-end"><Gear className="h-[9px] w-[9px]" tint="#aaa" /></div>
      </div>
      <div className="flex-1 border-l border-[#d3d9e6] bg-[#f7f7fa] pt-[2px] pl-[3px]">
        <div className="flex h-[20px] gap-[2px]">
          <div className="flex h-[17px] w-[17px] items-center justify-center rounded-[1px] border border-[#396487] bg-[#7fb2d6]">
            <Ico className="h-[14px] w-[14px]"><path d="M1 5L5 4L7 2H11L12 4L15 5V13H1Z" fill="#26292d" stroke="#111" /><circle cx="8" cy="9" r="3.300" fill="#444c55" stroke="#8a959f" /></Ico>
          </div>
          <div className="flex h-[17px] w-[17px] items-center justify-center rounded-[1px] border-2 border-[#777b80] bg-[#a9cfe2]">
            <div className="h-[9px] w-[11px] border border-[#e26f6f] bg-white" />
          </div>
        </div>
        <div className="w-[127px]">
          {groups.map(([name, rows]) => (
            <div key={name}>
              <div className="h-[17px] pl-[2px] text-[8.800px] leading-[17px] text-[#2a2a2a]">{name}</div>
              {rows.map(([l, v, kind], i) => (
                <div key={l + i} className="flex h-[13.600px] items-stretch border-t border-[#ececf0]">
                  <div className="w-[11px] border-r border-[#ececf0]" />
                  <div className={`flex w-[52px] items-center bg-white pl-[3px] whitespace-nowrap ${kind === "dim" ? "text-[#8a8a8a]" : "text-[#222]"}`}>{l}</div>
                  <div className={`flex w-[63px] items-center border-l border-[#ececf0] ${kind === "dim" ? "bg-[#e9eaee] text-[#777]" : kind === "gray" ? "bg-[#e9eaee]" : "bg-white"}`}>
                    <PropValue v={v} kind={kind} />
                  </div>
                </div>
              ))}
            </div>
          ))}
        </div>
      </div>
    </div>
  );
}

/* ---------- status bar ---------- */

const status: [string, string, boolean?][] = [
  ["Grid Snap", "w-[42px]"], ["Ortho", "w-[29px]"], ["Planar", "w-[30px]"], ["Osnap", "w-[30px]", true], ["SmartTrack", "w-[49px]", true],
  ["Gumball", "w-[39px]", true], ["Record History", "w-[60px]"], ["Filter", "w-[22px]"], ["Memory use: 432 MB", "w-[90px]"],
];

function StatusBar() {
  return (
    <div className="flex h-[13px] shrink-0 items-center border-t border-[#cdd4e3] bg-[#eef0f4] leading-[12px] whitespace-nowrap">
      <span className="w-[32px] border-r border-[#cdd4e3] pl-[4px]">CPlane</span>
      <span className="w-[57px] border-r border-[#cdd4e3] pl-[13px]">x 548.514</span>
      <span className="w-[57px] border-r border-[#cdd4e3] pl-[11px]">y 1160.153</span>
      <span className="w-[57px] border-r border-[#cdd4e3] pl-[17px]">z 0.000</span>
      <span className="w-[60px] pl-[10px]">Millimeters</span>
      <span className="h-[10px] w-[10px] rounded-[2px] border border-[#444] bg-white" />
      <span className="w-[98px] border-r border-[#cdd4e3] pl-px">View</span>
      {status.map(([t, w, b], i) => (
        <span key={t} className={`${w} ${b ? "bg-[#dfeaf5] font-bold tracking-[-0.200px]" : ""} ${i < 7 ? "border-r border-[#cdd4e3]" : ""} pl-[4px]`}>{t}</span>
      ))}
    </div>
  );
}

export default function App() {
  return (
    <div className="flex h-[662px] w-[1400px] overflow-hidden bg-black">
      <div className="flex w-[1248px] flex-col border-t border-b border-t-[#55525a] border-b-[#6d6f73] bg-[#e9eaee] font-['Open_Sans','Noto_Sans',sans-serif] text-[8px] tracking-[-0.200px] text-[#141414]">
        <MenuBar />
        <CommandArea />
        <ToolTabs />
        <Toolbar />
        <div className="flex min-h-0 flex-1">
          <ToolPalette />
          <Browser />
          <Viewport />
          <Properties />
        </div>
        <StatusBar />
      </div>
    </div>
  );
}
